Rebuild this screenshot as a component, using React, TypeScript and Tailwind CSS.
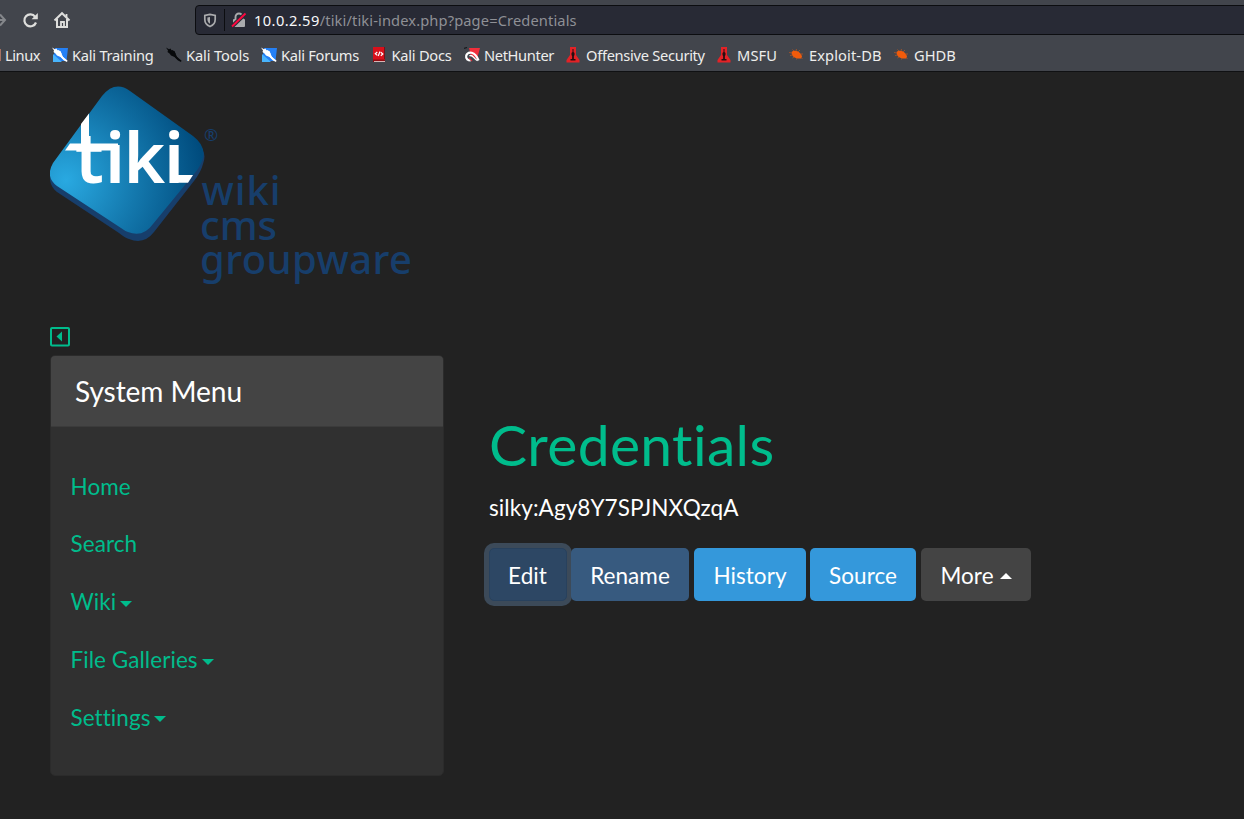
import React from "react";

type IconKind = "kali" | "tools" | "docs" | "hunter" | "tower" | "bug";

function Dragon({ fill }: { fill: string }) {
  return (
    <>
      <path d="M0 .5 3 2.200 4.500 1.500 5.500 3.500 8.500 4 9.500 6.500 11 10l4.500 3.500-.5 1.500-3-1.500L8.500 10 5 8.500 3.500 6.500 1.500 5 2 3.500Z" fill={fill} />
      <path d="m4 3 3 3M6 3.500l3 3.500M8 8l4 4" stroke={fill} strokeWidth="1.700" />
    </>
  );
}

function SiteIcon({ kind }: { kind: IconKind }) {
  return (
    <svg width="16" height="16" viewBox="0 0 16 16" className="shrink-0">
      {kind === "kali" && (
        <>
          <path d="M3 1h13l-1.500 13H1Z" fill="#2580f5" />
          <path d="M1 7 10 15H1Z" fill="#48b4fc" />
          <Dragon fill="#fff" />
        </>
      )}
      {kind === "tools" && <Dragon fill="#07090b" />}
      {kind === "docs" && (
        <>
          <path d="M1 0h12v15H1Z" fill="#d8101b" />
          <path d="M1 12.500h12V15H1Z" fill="#8f0c12" />
          <path d="M2 14.500h11" stroke="#d8b6b6" strokeWidth="1" />
          <path d="M12.500 0v12" stroke="#75131a" />
          <path d="m5.300 5-2 1.700 2 1.700M8.800 5.300l2 1.700-2 1.700M8 4.600 6.200 9" fill="none" stroke="#fff" strokeWidth="1.200" />
        </>
      )}
      {kind === "hunter" && (
        <>
          <path d="M5 1h11l-3 11-6-3Z" fill="#f02f3b" />
          <path d="M0 1.500 3 .5M1 9 4 5" stroke="#17191d" strokeWidth="1.200" />
          <path d="M14.500 13.500C11 4 4 4 2.200 8.500c-.7 3.500 2 5 4.500 5" fill="none" stroke="#fff" strokeWidth="2.200" />
          <path d="M5.500 9c3-2.500 4 3 8 4.500" fill="none" stroke="#fff" strokeWidth="1.500" />
          <path d="M5 11l3 3" stroke="#c8323c" strokeWidth="1.300" fill="none" />
        </>
      )}
      {kind === "tower" && (
        <>
          <path d="M4 0h6v8l3.500 5v2.500H.5V13L4 8Z" fill="#e32226" />
          <path d="M6.500 2h1v3l1 1v2l-.6 1v3H9.500v1.500h-5V12h1.600V9l-.6-1V6l1-1Z" fill="#270e10" />
        </>
      )}
      {kind === "bug" && (
        <>
          <path d="M2.500 5c2-2 6-1.500 8.500 1 2 2 2.500 4.500 1.500 5.500-3.500.5-8-.5-9.500-3.500Z" fill="#f15b0b" />
          <path d="m5 4-1.500-1.500M7 4l.5-2M9 5l2-2M11.500 7H14M3 6 0 5.500M3.500 8 1 8.500M5 10l-1.500 1M8 11l-.5 1.500M12 10l1.500 1.500" stroke="#a55428" strokeWidth=".9" />
        </>
      )}
    </svg>
  );
}

const bookmarks: { label: string; kind: IconKind; cell: string; tracking: string }[] = [
  { label: "Kali Training", kind: "kali", cell: "w-[114px]", tracking: "tracking-[-0.25px]" },
  { label: "Kali Tools", kind: "tools", cell: "w-[95px]", tracking: "tracking-[-0.12px]" },
  { label: "Kali Forums", kind: "kali", cell: "w-[110.500px]", tracking: "tracking-[-0.28px]" },
  { label: "Kali Docs", kind: "docs", cell: "w-[92.500px]", tracking: "tracking-[-0.25px]" },
  { label: "NetHunter", kind: "hunter", cell: "w-[102px]", tracking: "tracking-[-0.36px]" },
  { label: "Offensive Security", kind: "tower", cell: "w-[151px]", tracking: "tracking-[-0.3px]" },
  { label: "MSFU", kind: "tower", cell: "w-[72px]", tracking: "tracking-[0.1px]" },
  { label: "Exploit-DB", kind: "bug", cell: "w-[105px]", tracking: "tracking-[0.1px]" },
  { label: "GHDB", kind: "bug", cell: "w-[80px]", tracking: "tracking-normal" },
];

function BrowserChrome() {
  return (
    <header className="h-[72px] overflow-hidden border-b border-[#101113] bg-[#42454c] font-['Noto_Sans',sans-serif] [font-variant-ligatures:none]">
      <div className="flex h-10 items-center">
        <svg width="195" height="40" viewBox="0 0 195 40" fill="none" className="shrink-0">
          <path d="M-5 20H5M0 14.500l5 5.500-5 5.500" stroke="#85878b" strokeWidth="2" />
          <path d="M35.200 16.800A6 6 0 1 0 36 22.500" stroke="#dededc" strokeWidth="2.200" />
          <path d="M37.800 13v6.200h-6.200Z" fill="#dededc" />
          <path d="m54.500 20.500 7.500-7.300 7.500 7.300M57 19v8h10v-8" stroke="#dededc" strokeWidth="2" />
          <path d="M61 28v-6h3v6M66.500 17v-3" stroke="#dededc" strokeWidth="1.800" />
        </svg>
        <div className="flex h-[30px] w-[1060px] shrink-0 items-center rounded-l border border-[#0c0d10] bg-[#282a35]">
          <svg width="58" height="28" viewBox="196 6 58 28" fill="none" className="shrink-0">
            <path d="M210 14.300 204.800 15.500v4c0 3.500 2 5.700 5.200 7 3.200-1.300 5.200-3.500 5.200-7v-4Z" stroke="#aaabad" strokeWidth="1.700" />
            <path d="M210 17v6.700c-1.700-.9-2.600-2.200-2.600-4.200v-2Z" fill="#aaabad" />
            <path d="M224.500 9v22" stroke="#0c0d10" />
            <path d="M235.500 20v-3a3.500 3.500 0 0 1 7 0v3" stroke="#aaabad" strokeWidth="1.900" />
            <rect x="233" y="19" width="12" height="8" rx="1" fill="#aaabad" />
            <path d="m232 26.500 13.500-13" stroke="#282a35" strokeWidth="4" />
            <path d="m232 26.500 13.500-13" stroke="#ff063f" strokeWidth="1.900" />
          </svg>
          <span className="whitespace-nowrap text-[14.67px] leading-5 tracking-[0.12px] text-[#8f9096]">
            <span className="tracking-[0.4px] text-[#f8f8fa]">10.0.2.59</span>/tiki/tiki-index.php?page=Credentials
          </span>
        </div>
      </div>
      <nav className="flex h-[30px] items-center whitespace-nowrap text-[14.67px] text-[#eeeeec]">
        <span className="h-3 w-px shrink-0 bg-[#a77161]" />
        <span className="w-[51px] shrink-0 pl-1 tracking-[-0.45px]">Linux</span>
        {bookmarks.map((b) => (
          <span key={b.label} className={`flex shrink-0 items-center gap-1 ${b.cell} ${b.tracking}`}>
            <SiteIcon kind={b.kind} />
            {b.label}
          </span>
        ))}
      </nav>
    </header>
  );
}

function TikiLogo() {
  return (
    <svg width="370" height="210" viewBox="50 80 370 210" className="block">
      <defs>
        <radialGradient id="face" gradientUnits="userSpaceOnUse" cx="66" cy="180" r="138">
          <stop offset="0" stopColor="#29a9e1" />
          <stop offset=".5" stopColor="#1479ae" />
          <stop offset="1" stopColor="#004b7d" />
        </radialGradient>
      </defs>
      <path d="M55 165 103 101 196 144Q208 151 203 164Q201 172 194 181L154 232Q144 245 129 239Q125 238 119 233L57 192Q48 185 50 171Z" fill="#173e6b" />
      <path d="M102 96Q115 80 130 91L193 136Q206 146 203 158Q201 166 194 174L153 224Q143 238 128 232Q125 231 121 228L57 186Q45 177 53 163Z" fill="url(#face)" />
      <g fill="#fff">
        <path d="M65 150.500 70 143.500H118V150.500ZM81 124 89 113.500V147H81Z" />
        <path d="M178 175H193L188 182.700H171Z" />
        <text x="75 105 123.500 164" y="182.700" fontFamily="Noto Sans, sans-serif" fontSize="71" fontWeight="600">tiki</text>
      </g>
      <g fill="#173e6b" fontFamily="Noto Sans, sans-serif" fontWeight="500" fontSize="40">
        <text x="201.500" y="204.700" textLength="79">wiki</text>
        <text x="200" y="239.700" textLength="77">cms</text>
        <text x="200" y="274.300" textLength="212">groupware</text>
        <text x="204" y="140.500" fontSize="17" fontWeight="400">®</text>
      </g>
    </svg>
  );
}

function Caret({ up = false }: { up?: boolean }) {
  return (
    <svg width="12" height="6" viewBox="0 0 12 6" className="shrink-0" fill="currentColor">
      <path d={up ? "M0 6 6 0l6 6Z" : "M0 0h12L6 6Z"} />
    </svg>
  );
}

const menu = [
  { label: "Home", sub: false },
  { label: "Search", sub: false },
  { label: "Wiki", sub: true },
  { label: "File Galleries", sub: true },
  { label: "Settings", sub: true },
];

function SystemMenu() {
  return (
    <aside className="h-[421px] w-[393.500px] overflow-hidden rounded-[5px] border border-[#2b2b2b] bg-[#303030]">
      <h3 className="flex h-[71px] items-center border-b border-[#3b3b3b] bg-[#444] pl-6 text-[28.1px] tracking-[-0.08px] text-white">System Menu</h3>
      <ul className="pt-[30.600px] pl-[19.500px] text-[22.5px] tracking-[0.06px] text-[#00bc8c]">
        {menu.map((m) => (
          <li key={m.label} className="flex h-[57.75px] items-center gap-1">
            {m.label}
            {m.sub && <span className="pt-1"><Caret /></span>}
          </li>
        ))}
      </ul>
    </aside>
  );
}

function Actions() {
  const base = "flex h-[53px] items-center justify-center rounded-[5px]";
  return (
    <div className="flex text-[22.5px] tracking-[0.06px] text-white">
      <button className={`${base} w-[78px] border border-[#28415d] bg-[#2d4764] pt-0.5 pr-px ring-[5px] ring-[#3c4a59]`}>Edit</button>
      <button className={`${base} relative ml-1 w-[118px] bg-[#375a7f] pt-0.5`}>Rename</button>
      <button className={`${base} ml-[5px] w-[112px] bg-[#3498db] pt-0.5`}>History</button>
      <button className={`${base} ml-1 w-[106px] bg-[#3498db] pt-0.5`}>Source</button>
      <button className={`${base} ml-[5px] w-[110px] gap-1.5 bg-[#444] pt-0.5`}>More <Caret up /></button>
    </div>
  );
}

export default function App() {
  return (
    <div className="h-[819px] w-[1244px] overflow-hidden bg-[#222] font-['Lato',sans-serif] [font-variant-ligatures:none]">
      <BrowserChrome />
      <div className="pt-2 pl-[50px]">
        <TikiLogo />
        <div className="flex">
          <div className="w-[393px] shrink-0">
            <div className="flex h-[65px] items-end pb-2">
              <svg width="20" height="20" viewBox="0 0 20 20" fill="none">
                <rect x="1" y="1" width="18" height="17.500" rx="1" stroke="#00bc8c" strokeWidth="2" />
                <path d="M12 4.500v10L6.500 9.500Z" fill="#00bc8c" />
              </svg>
            </div>
            <SystemMenu />
          </div>
          <main className="pt-[118px] pl-[46px]">
            <h1 className="h-[72px] text-[57px] leading-[72px] tracking-[0.35px] text-[#00bc8c]">Credentials</h1>
            <p className="mt-[11px] mb-[23px] h-[34px] text-[22.5px] leading-[34px] tracking-[0.08px] text-white">silky:Agy8Y7SPJNXQzqA</p>
            <Actions />
          </main>
        </div>
      </div>
    </div>
  );
}
